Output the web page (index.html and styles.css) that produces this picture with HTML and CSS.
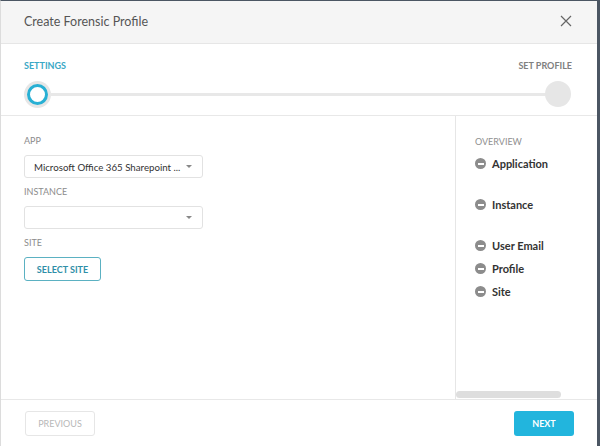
FILE: index.html
```html
<!DOCTYPE html>
<html>
<head>
<meta charset="utf-8">
<link rel="stylesheet" href="styles.css">
</head>
<body>
<div class="modal">
  <div class="header">
    <span class="title">Create Forensic Profile</span>
    <svg class="close" width="12" height="12" viewBox="0 0 12 12"><path d="M1 1L11 11M11 1L1 11" stroke="#666" stroke-width="1.2" fill="none"/></svg>
  </div>
  <div class="stepper">
    <div class="step-labels">
      <span class="step-label active">SETTINGS</span>
      <span class="step-label">SET PROFILE</span>
    </div>
    <div class="track">
      <span class="dot current"></span>
      <span class="line"></span>
      <span class="dot future"></span>
    </div>
  </div>
  <div class="content">
    <div class="form">
      <div class="field-label">APP</div>
      <div class="select"><span class="select-text">Microsoft Office 365 Sharepoint ...</span><span class="caret"></span></div>
      <div class="field-label">INSTANCE</div>
      <div class="select"><span class="select-text"></span><span class="caret"></span></div>
      <div class="field-label">SITE</div>
      <button class="btn-outline">SELECT SITE</button>
    </div>
    <div class="overview">
      <div class="overview-inner">
        <div class="ov-title">OVERVIEW</div>
        <div class="ov-item gap-lg"><span class="minus"></span>Application</div>
        <div class="ov-item gap-lg"><span class="minus"></span>Instance</div>
        <div class="ov-item"><span class="minus"></span>User Email</div>
        <div class="ov-item"><span class="minus"></span>Profile</div>
        <div class="ov-item"><span class="minus"></span>Site</div>
      </div>
      <div class="hscroll"><span class="thumb"></span></div>
    </div>
  </div>
  <div class="footer">
    <button class="btn-prev">PREVIOUS</button>
    <button class="btn-next">NEXT</button>
  </div>
</div>
</body>
</html>
```
FILE: styles.css
```css
html, body {
  margin: 0;
  padding: 0;
  background: #fff;
}
body {
  font-family: Lato, "Open Sans", sans-serif;
}
.modal {
  width: 596px;
  height: 445px;
  border-top: 1px solid #4b5663;
  border-right: 3px solid #4b5663;
  border-left: 1px solid #dcdcdc;
  display: flex;
  flex-direction: column;
  background: #fff;
}
.header {
  height: 42px;
  flex: none;
  background: #f5f5f5;
  border-bottom: 1px solid #e6e6e6;
  display: flex;
  align-items: center;
  justify-content: space-between;
  padding: 0 25px 0 23px;
}
.title {
  font-size: 12.5px;
  color: #555;
  margin-top: -1px;
}
.close {
  display: block;
  margin-top: -2px;
}
.stepper {
  height: 72px;
  flex: none;
  border-bottom: 1px solid #e8e8e8;
  padding: 0 26px 0 25px;
  box-sizing: border-box;
}
.step-labels {
  display: flex;
  justify-content: space-between;
  margin: 16px -1px 0 -2px;
  height: 12px;
}
.step-label {
  font-size: 9px;
  font-weight: 700;
  color: #808080;
  line-height: 12px;
}
.step-label.active {
  color: #3aa8c6;
}
.track {
  display: flex;
  align-items: center;
  margin-top: 9px;
  height: 26px;
}
.dot {
  flex: none;
  border-radius: 50%;
  box-sizing: border-box;
}
.dot.current {
  width: 21px;
  height: 21px;
  border: 3.5px solid #28b0d4;
  background: #fff;
  box-shadow: 0 0 0 3px #e6e6e6;
  margin-left: 1px;
}
.dot.future {
  width: 26px;
  height: 26px;
  background: #e6e6e6;
}
.line {
  flex: 1;
  height: 3px;
  background: #e8e8e8;
  margin: 0 -1px 0 2px;
}
.content {
  flex: 1;
  display: flex;
  min-height: 0;
}
.form {
  flex: 1;
  padding: 19px 0 0 23px;
}
.field-label {
  font-size: 9px;
  color: #8c8c8c;
  line-height: 12px;
  margin-bottom: 8px;
}
.select {
  width: 179px;
  height: 23px;
  box-sizing: border-box;
  border: 1px solid #e2e2e2;
  border-radius: 3px;
  display: flex;
  align-items: center;
  justify-content: space-between;
  padding: 0 10px 0 9px;
  margin-bottom: 8px;
}
.select-text {
  font-size: 9.7px;
  color: #333;
  white-space: nowrap;
}
.caret {
  width: 0;
  height: 0;
  border-left: 3px solid transparent;
  border-right: 3px solid transparent;
  border-top: 3px solid #888;
}
.btn-outline {
  display: block;
  font-family: inherit;
  font-size: 9px;
  font-weight: 700;
  color: #2f8fa8;
  background: #fff;
  border: 1px solid #5bb1c2;
  border-radius: 3px;
  width: 77px;
  height: 24px;
  padding: 0;
  margin-top: 7px;
}
.overview {
  width: 141px;
  flex: none;
  border-left: 1px solid #e6e6e6;
  display: flex;
  flex-direction: column;
  justify-content: space-between;
}
.overview-inner {
  padding: 20px 0 0 19px;
}
.ov-title {
  font-size: 9px;
  color: #909090;
  line-height: 12px;
  margin-bottom: 9px;
}
.ov-item {
  display: flex;
  align-items: center;
  font-size: 11px;
  font-weight: 700;
  color: #333;
  height: 13px;
  margin-bottom: 10px;
}
.ov-item.gap-lg {
  margin-bottom: 28px;
}
.minus {
  width: 11px;
  height: 11px;
  border-radius: 50%;
  background: #8c8c8c;
  margin-right: 6px;
  flex: none;
  position: relative;
}
.minus::after {
  content: "";
  position: absolute;
  left: 2.5px;
  right: 2.5px;
  top: 4.5px;
  height: 2px;
  background: #fff;
}
.hscroll {
  height: 7px;
  margin-bottom: 1px;
}
.thumb {
  display: block;
  width: 105px;
  height: 7px;
  border-radius: 4px;
  background: #dedede;
}
.footer {
  height: 46px;
  flex: none;
  border-top: 1px solid #e8e8e8;
  display: flex;
  align-items: center;
  justify-content: space-between;
  padding: 0 23px 0 24px;
}
.btn-prev {
  font-family: inherit;
  font-size: 9px;
  color: #b8b8b8;
  background: #fff;
  border: 1px solid #e6e6e6;
  border-radius: 3px;
  width: 70px;
  height: 25px;
  padding: 0;
}
.btn-next {
  font-family: inherit;
  font-size: 9px;
  font-weight: 700;
  color: #fff;
  background: #22b5dd;
  border: none;
  border-radius: 3px;
  width: 60px;
  height: 25px;
  padding: 0;
}
```
